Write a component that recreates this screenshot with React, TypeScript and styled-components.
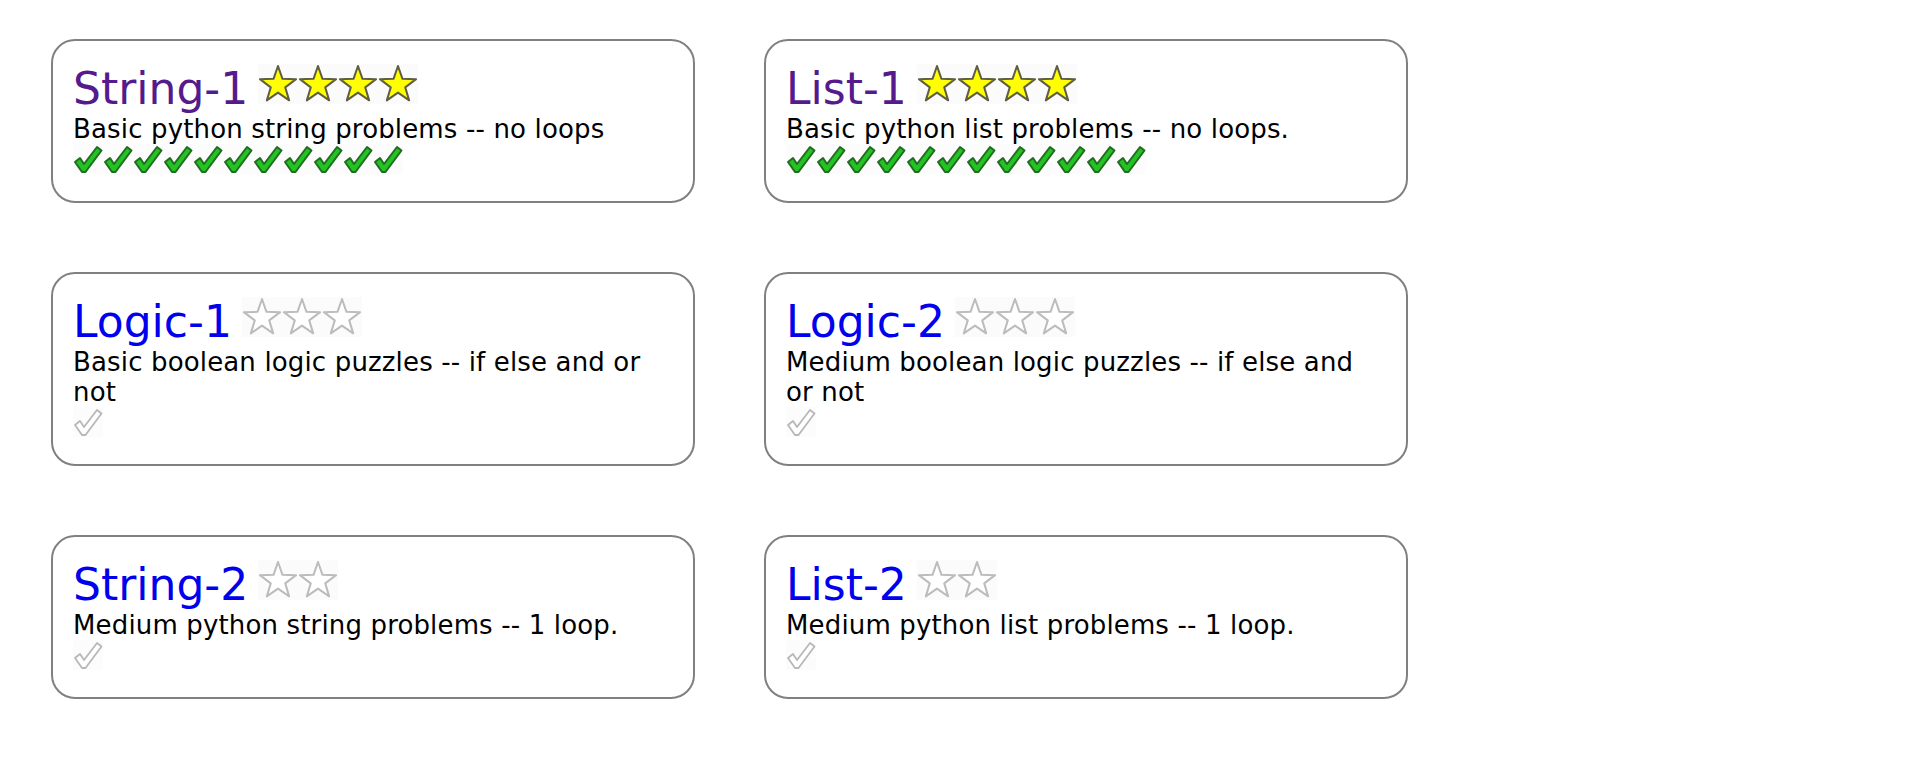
import React from "react";
import styled, { createGlobalStyle } from "styled-components";

const GlobalStyle = createGlobalStyle`
  html, body {
    margin: 0;
    padding: 0;
    background: #ffffff;
  }
  body {
    font-family: "DejaVu Sans", Verdana, sans-serif;
    color: #000000;
  }
`;

const Page = styled.div`
  padding: 39px 0 0 51px;
  display: grid;
  grid-template-columns: 644px 644px;
  column-gap: 69px;
  row-gap: 69px;
  align-items: start;
`;

const Card = styled.div`
  box-sizing: border-box;
  border: 2px solid #808080;
  border-radius: 24px;
  padding: 22px 20px 21px 20px;
  background: #ffffff;
`;

const Title = styled.div`
  font-size: 44px;
  line-height: normal;
`;

const TitleLink = styled.a<{ $visited?: boolean }>`
  color: ${(p) => (p.$visited ? "#551a8b" : "#0000ee")};
  text-decoration: none;
  cursor: pointer;
`;

const Stars = styled.span`
  display: inline-block;
  vertical-align: baseline;
  line-height: 0;
  margin-left: 10px;
  background: #fbfbfb;
`;

const StarSvg = styled.svg`
  display: inline-block;
  width: 40px;
  height: 40px;
`;

const Desc = styled.div`
  font-size: 26px;
  letter-spacing: 0.15px;
  line-height: normal;
`;

const Checks = styled.div`
  font-size: 26px;
  line-height: normal;
`;

const CheckSvg = styled.svg<{ $done?: boolean }>`
  display: inline-block;
  width: 30px;
  height: 30px;
  vertical-align: baseline;
  background: #fcfcfc;
`;

const STAR_POINTS =
  "20,2 24.47,14.85 38.07,15.13 27.23,23.35 31.17,36.37 20,28.6 8.83,36.37 12.77,23.35 1.93,15.13 15.53,14.85";

const Star = ({ filled }: { filled: boolean }) => (
  <StarSvg viewBox="0 0 40 40">
    <polygon
      points={STAR_POINTS}
      fill={filled ? "#ffff00" : "#ffffff"}
      stroke={filled ? "#5e5e44" : "#bcbcbc"}
      strokeWidth={2}
      strokeLinejoin="round"
    />
  </StarSvg>
);

const CHECK_POINTS = "2,18 7,14 11,20 24,3 28.5,6.5 12.5,28 9,28";

const Check = ({ done }: { done: boolean }) => (
  <CheckSvg viewBox="0 0 30 30" $done={done}>
    <polygon
      points={CHECK_POINTS}
      fill={done ? "#22c422" : "#ffffff"}
      stroke={done ? "#236b23" : "#b8b8b8"}
      strokeWidth={done ? 2 : 1.8}
      strokeLinejoin="round"
    />
  </CheckSvg>
);

type Section = {
  name: string;
  visited: boolean;
  stars: number;
  filled: boolean;
  desc: string;
  checks: number;
  done: boolean;
};

const sections: Section[] = [
  { name: "String-1", visited: true, stars: 4, filled: true, desc: "Basic python string problems -- no loops", checks: 11, done: true },
  { name: "List-1", visited: true, stars: 4, filled: true, desc: "Basic python list problems -- no loops.", checks: 12, done: true },
  { name: "Logic-1", visited: false, stars: 3, filled: false, desc: "Basic boolean logic puzzles -- if else and or not", checks: 1, done: false },
  { name: "Logic-2", visited: false, stars: 3, filled: false, desc: "Medium boolean logic puzzles -- if else and or not", checks: 1, done: false },
  { name: "String-2", visited: false, stars: 2, filled: false, desc: "Medium python string problems -- 1 loop.", checks: 1, done: false },
  { name: "List-2", visited: false, stars: 2, filled: false, desc: "Medium python list problems -- 1 loop.", checks: 1, done: false },
];

export default function App() {
  return (
    <>
      <GlobalStyle />
      <Page>
        {sections.map((s) => (
          <Card key={s.name}>
            <Title>
              <TitleLink $visited={s.visited}>{s.name}</TitleLink>
              <Stars>
                {Array.from({ length: s.stars }).map((_, i) => (
                  <Star key={i} filled={s.filled} />
                ))}
              </Stars>
            </Title>
            <Desc>{s.desc}</Desc>
            <Checks>
              {Array.from({ length: s.checks }).map((_, i) => (
                <Check key={i} done={s.done} />
              ))}
            </Checks>
          </Card>
        ))}
      </Page>
    </>
  );
}
